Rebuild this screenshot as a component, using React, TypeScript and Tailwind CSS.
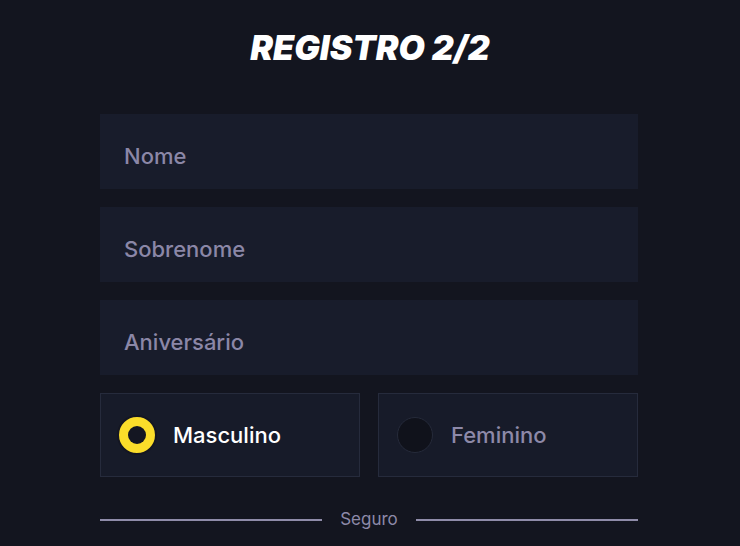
import { useState } from "react";

const FIELDS = ["Nome", "Sobrenome", "Aniversário"];

type Gender = "m" | "f";

const GenderOption = ({
  label,
  selected,
  onSelect,
}: {
  label: string;
  selected: boolean;
  onSelect: () => void;
}) => (
  <button
    type="button"
    onClick={onSelect}
    className="flex h-[84px] flex-1 items-center gap-[16px] border border-[#262b3c] bg-[#171b29] pl-[16px] text-left"
  >
    <span className="grid size-[40px] place-items-center">
      {selected ? (
        <span className="grid size-[40px] place-items-center rounded-full border-2 border-[#141622] bg-[#fbdd2a]">
          <span className="size-[18px] rounded-full bg-[#141622]" />
        </span>
      ) : (
        <span className="size-[36px] rounded-full border border-[#252a3a] bg-[#10121b]" />
      )}
    </span>
    <span
      className={`text-[22px] font-medium ${
        selected ? "text-white" : "text-[#8d89a8]"
      }`}
    >
      {label}
    </span>
  </button>
);

export default function App() {
  const [gender, setGender] = useState<Gender>("m");

  return (
    <div className="min-h-[546px] bg-[#13151f] pt-[27px] font-['Inter',_'Noto_Sans',_sans-serif]">
      <h1 className="text-center text-[34px] leading-[41px] font-black italic text-white">
        REGISTRO 2/2
      </h1>

      <form className="mt-[46px] ml-[100px] flex w-[538px] flex-col gap-[18px]">
        {FIELDS.map((field) => (
          <input
            key={field}
            type="text"
            placeholder={field}
            className="h-[75px] bg-[#181c2b] px-6 pt-2 text-[22px] font-medium text-white outline-none placeholder:text-[#8b87a7]"
          />
        ))}

        <div className="flex gap-[18px]">
          <GenderOption
            label="Masculino"
            selected={gender === "m"}
            onSelect={() => setGender("m")}
          />
          <GenderOption
            label="Feminino"
            selected={gender === "f"}
            onSelect={() => setGender("f")}
          />
        </div>

        <div className="mt-[12px] flex items-center gap-[18px]">
          <span className="h-[2px] flex-1 bg-[#8f8ca9]" />
          <span className="text-[17px] text-[#8d89a8]">Seguro</span>
          <span className="h-[2px] flex-1 bg-[#8f8ca9]" />
        </div>
      </form>
    </div>
  );
}
